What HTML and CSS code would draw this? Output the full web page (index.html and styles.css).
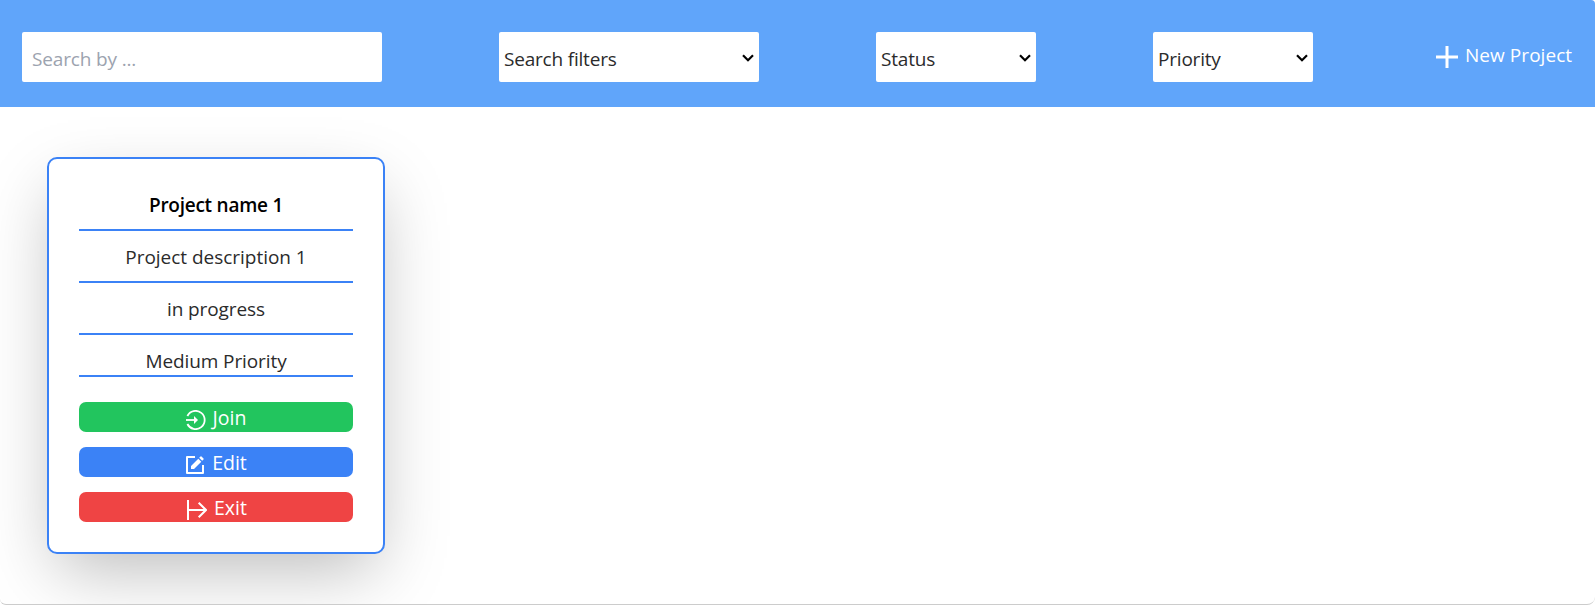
FILE: index.html
```html
<!DOCTYPE html>
<html lang="en">
<head>
<meta charset="utf-8">
<title>Projects</title>
<link rel="stylesheet" href="styles.css">
</head>
<body>
<div class="app">
  <header class="toolbar">
    <input class="field search" type="text" placeholder="Search by ...">
    <select class="field filters"><option>Search filters</option></select>
    <select class="field choice status"><option>Status</option></select>
    <select class="field choice priority"><option>Priority</option></select>
    <button class="new-project">
      <svg class="plus" viewBox="0 0 22 22"><path d="M11 0v22M0 11h22" stroke="currentColor" stroke-width="3"/></svg>
      <span class="t-new">New Project</span>
    </button>
  </header>
  <main class="board">
    <article class="card">
      <h2 class="row name">Project name 1</h2>
      <p class="row description">Project description 1</p>
      <p class="row">in progress</p>
      <p class="row last">Medium Priority</p>
      <div class="actions">
        <button class="action join">
          <svg class="icon" viewBox="0 0 20 20" fill="none" stroke="currentColor"><path d="M1.4 6A9.1 9.1 0 1 1 1.4 14" stroke-width="1.8"/><path d="M0 10h9" stroke-width="1.8"/><path d="M8 6l4 4-4 4z" fill="currentColor" stroke="none"/></svg>
          <span>Join</span>
        </button>
        <button class="action edit">
          <svg class="icon" viewBox="0 0 20 20" fill="none" stroke="currentColor"><path d="M10 2H2v16h16v-8" stroke-width="2" stroke-linejoin="round"/><path d="M6 14v-3l7.300-7.300 3 3L9 14zM14.200 2.800l1.300-1.300q.5-.4 1 0l2 2q.4.500 0 1l-1.300 1.300z" fill="currentColor" stroke="none"/></svg>
          <span>Edit</span>
        </button>
        <button class="action exit">
          <svg class="icon" viewBox="0 0 20 20" fill="none" stroke="currentColor" stroke-width="2"><path d="M1 0v20M1 10h17.500M11.700 2.700L19 10l-7.300 7.300"/></svg>
          <span>Exit</span>
        </button>
      </div>
    </article>
  </main>
</div>
</body>
</html>
```
FILE: styles.css
```css
* { box-sizing: border-box; }
body {
  margin: 0;
  height: 605px;
  background: #fff;
  color: #2b2b2b;
  font: 400 19px/30px "Open Sans", "Noto Sans", sans-serif;
  overflow: hidden;
}
button, input, select { font: inherit; border: 0; color: inherit; margin: 0; }
.app {
  height: 605px;
  border-bottom: 1px solid #ccc;
  border-radius: 0 4px 8px 6px;
  overflow: hidden;
}
.toolbar {
  display: flex;
  justify-content: space-between;
  height: 107px;
  padding: 32px 22px 25px;
  background: #60a5fa;
}
.field {
  height: 50px;
  background: #fff;
  border-radius: 2px;
  padding: 3px 0 0;
}
.search { width: 360px; padding-left: 10px; letter-spacing: -0.15px; }
.search::placeholder { color: #9ca3af; opacity: 1; }
/* closed selects draw their own chevron */
.filters, .choice {
  appearance: none;
  padding-left: 5px;
  letter-spacing: -0.2px;
  background: #fff url("data:image/svg+xml,%3Csvg xmlns='http://www.w3.org/2000/svg' viewBox='0 0 12 8'%3E%3Cpath d='M1 1.200l5 5 5-5' fill='none' stroke='%23000' stroke-width='2.200'/%3E%3C/svg%3E") no-repeat right 5px top 22px / 12px 8px;
}
.filters { width: 260px; }
.choice { width: 160px; }
.new-project {
  display: flex;
  gap: 8px;
  width: 143px;
  height: 50px;
  padding: 8px 0 0 6px;
  background: none;
  color: #fff;
  font-weight: 500;
  white-space: nowrap;
}
.plus { width: 22px; height: 22px; margin-top: 6px; flex: none; }
.t-new { letter-spacing: 0.05px; margin-left: -1px; }
.board { padding: 50px 47px; }
.card {
  width: 338px;
  height: 397px;
  padding: 30px;
  border: 2px solid #3b82f6;
  border-radius: 10px;
  background: #fff;
  box-shadow: 0 25px 66px -10px rgba(0, 0, 0, .27);
  text-align: center;
}
.row {
  margin: 0 0 10px;
  padding: 1px 0 9px;
  border-bottom: 2px solid #3b82f6;
  font-size: 19px;
  font-weight: 400;
  letter-spacing: -0.1px;
}
.description { letter-spacing: -0.03px; }
.name { color: #000; font-weight: 600; letter-spacing: -0.25px; }
.last { height: 32px; padding-bottom: 0; margin-bottom: 25px; }
.actions { display: grid; gap: 15px; }
.action {
  display: flex;
  justify-content: center;
  gap: 7px;
  height: 30px;
  padding: 1px 0 0;
  border-radius: 7px;
  color: #fff;
  font-size: 19.5px;
  font-weight: 500;
}
.icon { width: 20px; height: 20px; margin-top: 7px; flex: none; }
.join { background: #22c55e; }
.edit { background: #3b82f6; }
.exit { background: #ef4444; padding-left: 2px; }
```
